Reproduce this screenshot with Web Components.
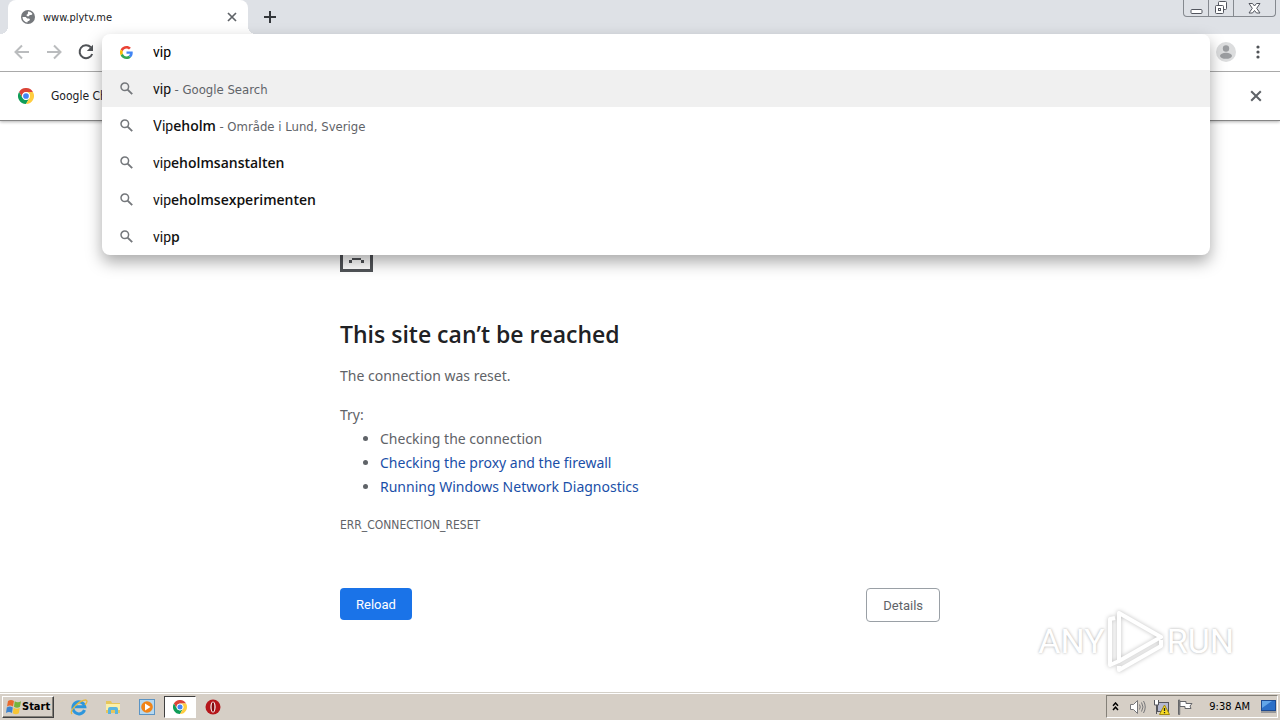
<!DOCTYPE html>
<html lang="en">
<head>
<meta charset="utf-8">
<title>www.plytv.me</title>
<style>
  html, body {
    height: 100%;
    margin: 0;
  }
  body {
    background: #fff;
    font-family: "DejaVu Sans Condensed", Tahoma, sans-serif;
    color: #202124;
  }
</style>
</head>
<body>
<browser-desktop>
  <tab-strip slot="tabs" label="www.plytv.me"></tab-strip>
  <tool-bar slot="toolbar">
    <omni-box value="vip">
      <search-suggestion active>vip <span slot="note">- Google Search</span></search-suggestion>
      <search-suggestion>Vip<b>eholm</b> <span slot="note">- Område i Lund, Sverige</span></search-suggestion>
      <search-suggestion>vip<b>eholmsanstalten</b></search-suggestion>
      <search-suggestion>vip<b>eholmsexperimenten</b></search-suggestion>
      <search-suggestion>vip<b>p</b></search-suggestion>
    </omni-box>
  </tool-bar>
  <info-bar slot="infobar">Google Ch</info-bar>
  <error-page></error-page>
  <any-run-mark slot="mark"></any-run-mark>
  <task-bar slot="taskbar"></task-bar>
</browser-desktop>

<script>
class BaseElement extends HTMLElement {
  constructor() {
    super();
    this.attachShadow({ mode: "open" });
  }

  connectedCallback() {
    this.shadowRoot.innerHTML = this.render();
  }
}

const buttonReset = `
  * { box-sizing: border-box; }
  button {
    display: grid;
    place-items: center;
    padding: 0;
    border: 0;
    background: none;
    font: inherit;
    color: inherit;
  }
  svg { display: block; }
`;

const chromeLogo = (size) => `
  <svg width="${size}" height="${size}" viewBox="0 0 48 48" aria-hidden="true">
    <path fill="#db4437" d="M3.2 12A24 24 0 0 1 44.8 12H24a12 12 0 0 0-10.4 18z"/>
    <path fill="#0f9d58" d="M3.2 12A24 24 0 0 0 24 48l10.4-18A12 12 0 0 1 13.6 30z"/>
    <path fill="#ffcd40" d="M44.8 12A24 24 0 0 1 24 48l10.4-18A12 12 0 0 0 24 12z"/>
    <circle cx="24" cy="24" r="11" fill="#fff"/>
    <circle cx="24" cy="24" r="8.6" fill="#4285f4"/>
  </svg>`;

const crossIcon = (size) => `
  <svg width="${size}" height="${size}" viewBox="0 0 10 10" aria-hidden="true">
    <path d="M1 1l8 8M9 1l-8 8" stroke="#5f6368" stroke-width="1.7"/>
  </svg>`;

class BrowserDesktop extends BaseElement {
  render() {
    return `
      <style>
        :host {
          display: flex;
          flex-direction: column;
          min-height: 100vh;
          position: relative;
        }
        main { flex: 1; }
      </style>
      <slot name="tabs"></slot>
      <slot name="toolbar"></slot>
      <slot name="infobar"></slot>
      <main><slot></slot></main>
      <slot name="mark"></slot>
      <slot name="taskbar"></slot>
    `;
  }
}

class TabStrip extends BaseElement {
  render() {
    return `
      <style>
        ${buttonReset}
        :host {
          display: flex;
          height: 34px;
          padding: 0 4px 0 8px;
          box-sizing: border-box;
          background: #dee1e6;
        }
        .tab {
          position: relative;
          display: flex;
          align-items: center;
          gap: 8px;
          width: 240px;
          padding: 0 10px 0 13px;
          border-radius: 8px 8px 0 0;
          background: #fff;
          font-size: 11px;
        }
        .tab::before, .tab::after {
          content: "";
          position: absolute;
          bottom: 0;
          width: 8px;
          height: 8px;
        }
        .tab::before {
          left: -8px;
          background: radial-gradient(circle at 0 0, transparent 8px, #fff 8px);
        }
        .tab::after {
          right: -8px;
          background: radial-gradient(circle at 100% 0, transparent 8px, #fff 8px);
        }
        .title { flex: 1; }
        .close { width: 12px; height: 16px; }
        .add { width: 28px; margin-left: 8px; }
        .window {
          display: flex;
          height: 17px;
          margin-left: auto;
          border: 1px solid #85898f;
          border-top: 0;
          border-radius: 0 0 4px 4px;
        }
        .window button { width: 25px; border-right: 1px solid #85898f; }
        .window button:last-child { width: 41px; border-right: 0; }
      </style>
      <div class="tab">
        <svg width="14" height="14" viewBox="0 0 14 14" aria-hidden="true">
          <circle cx="7" cy="7" r="7" fill="#75787c"/>
          <path fill="#fff" d="M7 1.600c2-.2 3.600 1 4.500 2.400l-1.200 1.100H8.600L8 6.300H6.200L5.300 5l1.500-.9zM1.500 7l3.200.1 1.500 1.400h1.900l.9 1-.8 1.300-1.500.5-.3 1.100c-2.800-.2-4.800-2.500-4.900-5.400z"/>
        </svg>
        <span class="title">${this.getAttribute("label")}</span>
        <button class="close" aria-label="Close tab">${crossIcon(10)}</button>
      </div>
      <button class="add" aria-label="New tab">
        <svg width="12" height="12" viewBox="0 0 12 12"><path d="M6 0v12M0 6h12" stroke="#33363b" stroke-width="2"/></svg>
      </button>
      <div class="window">
        <button aria-label="Minimize">
          <svg width="13" height="14" viewBox="0 0 13 14"><rect x="1" y="8.500" width="11" height="4" rx="1" fill="#fff" stroke="#53565f"/></svg>
        </button>
        <button aria-label="Restore">
          <svg width="14" height="14" viewBox="0 0 14 14" fill="#fff" stroke="#53565f">
            <rect x="4.500" y=".5" width="8" height="8" rx="1"/>
            <rect x="1.500" y="4.500" width="8" height="8" rx="1"/>
            <rect x="4.500" y="7.500" width="2" height="2"/>
          </svg>
        </button>
        <button aria-label="Close">
          <svg width="13" height="13" viewBox="0 0 13 13"><path fill="#fff" stroke="#53565f" d="M1 1.500h3.500l2 2.500 2-2.500H12L8.700 6.300 12 11H8.500l-2-2.500-2 2.500H1l3.300-4.700z"/></svg>
        </button>
      </div>
    `;
  }
}

class ToolBar extends BaseElement {
  render() {
    return `
      <style>
        ${buttonReset}
        :host {
          display: flex;
          position: relative;
          z-index: 2;
          height: 38px;
          padding: 0 6px;
          box-sizing: border-box;
          border-bottom: 1px solid #a9a9a9;
          background: #fff;
        }
        button { width: 32px; height: 36px; }
        slot { display: block; flex: 1; }
      </style>
      <button aria-label="Back" disabled>
        <svg width="16" height="16" viewBox="0 0 16 16" fill="none" stroke="#babcbe" stroke-width="2"><path d="M15 8H2M8 1.500L1.500 8 8 14.500"/></svg>
      </button>
      <button aria-label="Forward" disabled>
        <svg width="16" height="16" viewBox="0 0 16 16" fill="none" stroke="#babcbe" stroke-width="2"><path d="M1 8h13M8 1.500L14.500 8 8 14.500"/></svg>
      </button>
      <button aria-label="Reload">
        <svg width="16" height="16" viewBox="0 0 16 16"><path d="M12.800 3.200A6.500 6.500 0 1 0 14.200 10" fill="none" stroke="#505357" stroke-width="2"/><path d="M15 .8v6.200H8.800z" fill="#505357"/></svg>
      </button>
      <slot></slot>
      <button aria-label="Profile">
        <svg width="20" height="20" viewBox="0 0 20 20"><circle cx="10" cy="10" r="10" fill="#dcddde"/><circle cx="10" cy="6.500" r="3.200" fill="#9b9da0"/><ellipse cx="10" cy="13.800" rx="6" ry="3" fill="#9b9da0"/></svg>
      </button>
      <button aria-label="Menu">
        <svg width="4" height="14" viewBox="0 0 4 14" fill="#505357"><circle cx="2" cy="2" r="1.600"/><circle cx="2" cy="7" r="1.600"/><circle cx="2" cy="12" r="1.600"/></svg>
      </button>
    `;
  }
}

class OmniBox extends BaseElement {
  render() {
    return `
      <style>
        :host {
          display: block;
          position: relative;
        }
        .popup {
          position: absolute;
          top: 0;
          left: 0;
          right: 0;
          overflow: hidden;
          border-radius: 8px;
          background: #fff;
          box-shadow: 0 7px 16px rgba(0, 0, 0, 0.34);
        }
        label {
          display: flex;
          align-items: center;
          gap: 20px;
          height: 36px;
          padding: 0 18px;
        }
        svg { flex: none; }
        input {
          flex: 1;
          min-width: 0;
          padding: 0;
          border: 0;
          outline: 0;
          background: none;
          font-family: Roboto, sans-serif;
          font-size: 14px;
          color: #000;
        }
      </style>
      <div class="popup">
        <label>
          <svg width="13" height="13" viewBox="0 0 48 48" aria-label="Google">
            <path fill="#ea4335" d="M24 9.500c3.540 0 6.710 1.220 9.210 3.600l6.850-6.850C35.900 2.380 30.470 0 24 0 14.620 0 6.510 5.380 2.560 13.220l7.980 6.190C12.430 13.720 17.740 9.500 24 9.500z"/>
            <path fill="#4285f4" d="M46.980 24.550c0-1.570-.15-3.090-.38-4.550H24v9.020h12.940c-.58 2.960-2.260 5.480-4.780 7.180l7.730 6c4.510-4.180 7.090-10.360 7.090-17.650z"/>
            <path fill="#fbbc05" d="M10.530 28.590a14.500 14.500 0 0 1 0-9.180l-7.980-6.190a24 24 0 0 0 0 21.560l7.980-6.190z"/>
            <path fill="#34a853" d="M24 48c6.480 0 11.930-2.130 15.890-5.810l-7.730-6c-2.150 1.450-4.920 2.300-8.160 2.300-6.260 0-11.570-4.220-13.470-9.910l-7.980 6.190C6.510 42.620 14.620 48 24 48z"/>
          </svg>
          <input type="text" aria-label="Address and search bar" value="${this.getAttribute("value")}">
        </label>
        <slot></slot>
      </div>
    `;
  }
}

class SearchSuggestion extends BaseElement {
  render() {
    return `
      <style>
        :host {
          display: flex;
          align-items: center;
          gap: 20px;
          height: 37px;
          padding: 0 18px;
          font-family: Roboto, sans-serif;
          font-size: 14px;
          color: #111;
        }
        :host([active]) { background: #f0f0f0; }
        ::slotted(b) {
          font-family: "Open Sans", sans-serif;
          font-weight: 600;
        }
        ::slotted(span) {
          font-family: "DejaVu Sans Condensed", Tahoma, sans-serif;
          font-size: 13px;
          color: #5f6368;
        }
        svg { flex: none; }
      </style>
      <svg width="13" height="13" viewBox="0 0 13 13" fill="none" stroke="#75787c" aria-hidden="true">
        <circle cx="4.800" cy="4.800" r="3.800" stroke-width="1.500"/>
        <path d="M7.600 7.600l4.600 4.600" stroke-width="1.900"/>
      </svg>
      <div><slot></slot><slot name="note"></slot></div>
    `;
  }
}

class InfoBar extends BaseElement {
  render() {
    return `
      <style>
        ${buttonReset}
        :host {
          display: flex;
          position: relative;
          align-items: center;
          gap: 17px;
          height: 49px;
          padding: 0 18px;
          box-sizing: border-box;
          border-bottom: 1px solid #858585;
          box-shadow: 0 1px 3px rgba(0, 0, 0, 0.3);
          background: #fff;
          font-size: 12px;
        }
        button { width: 12px; height: 16px; margin-left: auto; }
      </style>
      ${chromeLogo(16)}
      <span><slot></slot></span>
      <button aria-label="Close">${crossIcon(12)}</button>
    `;
  }
}

class ErrorPage extends BaseElement {
  render() {
    return `
      <style>
        ${buttonReset}
        :host {
          display: block;
          max-width: 600px;
          margin: 0 auto;
          padding-top: 107px;
          font-family: "Noto Sans", "Segoe UI", sans-serif;
          font-size: 14px;
          line-height: 24px;
          color: #5f6368;
        }
        h1 {
          margin: 47px 0 15px;
          font-family: "Open Sans", "Segoe UI", sans-serif;
          font-size: 23px;
          font-weight: 600;
          line-height: 30px;
          color: #202124;
        }
        p { margin: 0 0 15px; }
        .try { margin: 0; }
        ul { margin: 0; padding-left: 40px; }
        a { color: #1a4fa8; text-decoration: none; }
        .code {
          margin: 14px 0 0;
          font-family: "DejaVu Sans Condensed", Tahoma, sans-serif;
          font-size: 12px;
        }
        .actions {
          display: flex;
          justify-content: space-between;
          align-items: flex-start;
          margin-top: 51px;
          font-family: Roboto, sans-serif;
          font-size: 13px;
        }
        .actions button {
          height: 34px;
          padding: 2px 16px 0;
          border: 1px solid #9aa0a6;
          border-radius: 4px;
        }
        .actions .primary {
          height: 32px;
          border: 0;
          background: #1a73e8;
          color: #fff;
        }
      </style>
      <svg width="33" height="44" viewBox="0 0 33 44" fill="#505357" aria-hidden="true">
        <path d="M0 0h22v3H3v38h27V11h3v33H0z"/>
        <path d="M22 0h3v3h3v3h3v3h2v3H22z"/>
        <path d="M9 20h3v3H9zM21 20h3v3h-3zM12 30h9v2h3v3h-3v-3h-9v3H9v-3h3z"/>
      </svg>
      <h1>This site can’t be reached</h1>
      <p>The connection was reset.</p>
      <p class="try">Try:</p>
      <ul>
        <li>Checking the connection</li>
        <li><a href="#proxy">Checking the proxy and the firewall</a></li>
        <li><a href="#diagnostics">Running Windows Network Diagnostics</a></li>
      </ul>
      <p class="code">ERR_CONNECTION_RESET</p>
      <div class="actions">
        <button class="primary">Reload</button>
        <button>Details</button>
      </div>
    `;
  }
}

class AnyRunMark extends BaseElement {
  render() {
    return `
      <style>
        :host {
          display: flex;
          position: absolute;
          right: 46px;
          bottom: 48px;
          align-items: center;
          gap: 2px;
          font-family: Roboto, sans-serif;
          font-size: 34px;
          line-height: 62px;
          color: #fff;
          text-shadow: 0 0 3px rgba(0, 0, 0, 0.34);
        }
        svg { filter: drop-shadow(0 0 2px rgba(0, 0, 0, 0.26)); }
      </style>
      <span>ANY</span>
      <svg width="58" height="62" viewBox="0 0 58 62" fill="none" stroke="#fff" stroke-width="4" stroke-linejoin="round" aria-hidden="true">
        <path d="M12 3v48l42-24z"/>
        <path d="M8 8L3 9v46l9-4M12 56v4l42-24v-6"/>
      </svg>
      <span>RUN</span>
    `;
  }
}

class TaskBar extends BaseElement {
  render() {
    return `
      <style>
        ${buttonReset}
        :host {
          display: flex;
          align-items: center;
          height: 28px;
          padding: 0 2px;
          box-sizing: border-box;
          border-top: 1px solid #d4d0c8;
          box-shadow: inset 0 1px #fff;
          background: #d6cfc6;
          font-size: 11px;
          color: #000;
        }
        .start {
          display: flex;
          align-items: center;
          height: 22px;
          padding: 0 3px 0 2px;
          border: 1px solid;
          border-color: #fff #404040 #404040 #fff;
          box-shadow: inset -1px -1px #848078;
          font-weight: bold;
        }
        nav { display: flex; align-items: center; margin-left: 8px; }
        nav button { width: 34px; height: 22px; }
        nav .active {
          width: 32px;
          border: 1px solid;
          border-color: #404040 #fff #fff #404040;
          background: #fff;
        }
        .tray {
          display: flex;
          align-items: center;
          height: 23px;
          margin-left: auto;
          padding-left: 4px;
          border: 1px solid;
          border-color: #848078 #fff #fff #848078;
        }
        .tray button { width: 24px; height: 20px; }
        .tray .more { width: 8px; margin-right: 6px; }
        time { margin: 0 9px 0 12px; }
        .tray .desktop { width: 18px; }
      </style>
      <button class="start">
        <svg width="17" height="16" viewBox="0 0 17 16" aria-hidden="true">
          <path fill="#e8692c" d="M3 2q3-2 6 0L8 7.500q-3-2-6 0z"/>
          <path fill="#74b43c" d="M9.700 2.300q3 1.700 6.300 0L15 7.800q-3 1.700-6 0z"/>
          <path fill="#3c83ce" d="M1.800 8.500q3-2 6 0L7 14q-3-2-6 0z"/>
          <path fill="#f7c534" d="M8.600 8.800q3 1.700 6.200 0l-1 5.500q-3 1.700-6 0z"/>
        </svg>
        Start
      </button>
      <nav>
        <button aria-label="Internet Explorer">
          <svg width="18" height="18" viewBox="0 0 18 18" fill="none">
            <path d="M14.500 12a6 6 0 1 1 .3-3.200H5" stroke="#2d96dc" stroke-width="3"/>
            <path d="M2 16c-3-3 7-14 14-14 2 1 .5 3-1 5" stroke="#e7b93c" stroke-width="1.300"/>
          </svg>
        </button>
        <button aria-label="Explorer">
          <svg width="18" height="18" viewBox="0 0 18 18">
            <path fill="#e6c65c" d="M2 3h5l1 2h8v10H2z"/>
            <path fill="#fbf0a8" d="M2 6h14v6H2z"/>
            <path fill="#59b5e0" d="M4 16v-5q0-2 2-2h6q2 0 2 2v5h-3v-4H7v4z"/>
          </svg>
        </button>
        <button aria-label="Media Player">
          <svg width="16" height="16" viewBox="0 0 16 16">
            <rect x=".5" y=".5" width="15" height="15" fill="#b5d8f0" stroke="#5b94c4"/>
            <circle cx="8" cy="8" r="5.800" fill="#f08418"/>
            <path fill="#fff" d="M6 4.500v7L11.500 8z"/>
          </svg>
        </button>
        <button class="active" aria-label="Google Chrome">${chromeLogo(14)}</button>
        <button aria-label="Opera">
          <svg width="16" height="16" viewBox="0 0 16 16"><circle cx="8" cy="8" r="7.500" fill="#b5161b"/><ellipse cx="8" cy="8" rx="2.600" ry="5.500" fill="#fff"/><ellipse cx="8" cy="8" rx="1.400" ry="4.700" fill="#80090e"/></svg>
        </button>
      </nav>
      <div class="tray">
        <button class="more" aria-label="Show hidden icons">
          <svg width="7" height="9" viewBox="0 0 7 9" fill="none" stroke="#000" stroke-width="1.500"><path d="M1 3.800L3.500 1 6 3.800M1 8l2.500-2.800L6 8"/></svg>
        </button>
        <button aria-label="Volume">
          <svg width="17" height="16" viewBox="0 0 17 16" fill="none" stroke="#77777a">
            <path fill="#fff" d="M1.500 5.500h3l4-4v13l-4-4h-3z"/>
            <path d="M10.500 5.500q1.500 2.500 0 5M12.500 3.500q3 4.500 0 9M14.500 2q3.500 6 0 12"/>
          </svg>
        </button>
        <button aria-label="Network">
          <svg width="17" height="16" viewBox="0 0 17 16">
            <rect x="4.500" y="3.500" width="11" height="9" fill="#b5b9d0" stroke="#55565d"/>
            <path d="M1.500 1v5h4V1M3.500 6v9" fill="#fff" stroke="#55565d"/>
            <path d="M11.500 6l5 9.500h-10z" fill="#f7dc25" stroke="#a28a10"/>
            <path d="M11.500 9v3M11.500 13v1.200" stroke="#222" stroke-width="1.300"/>
          </svg>
        </button>
        <button aria-label="Action Center">
          <svg width="17" height="16" viewBox="0 0 17 16" fill="#fff" stroke="#66676a">
            <path d="M1.500 1v14.500h1.200V1z"/>
            <path d="M3 2.500h6v2h6l-2 2.500 1 2.500H8v-2H3z"/>
          </svg>
        </button>
        <time>9:38 AM</time>
        <button class="desktop" aria-label="Show desktop">
          <svg width="15" height="13" viewBox="0 0 15 13"><rect x=".5" y=".5" width="14" height="10" fill="#2b6fc8" stroke="#1d4a91"/><path d="M1 1h10L1 8z" fill="#62a6e9"/><path d="M0 12h15" stroke="#58616e"/></svg>
        </button>
      </div>
    `;
  }
}

customElements.define("browser-desktop", BrowserDesktop);
customElements.define("tab-strip", TabStrip);
customElements.define("tool-bar", ToolBar);
customElements.define("omni-box", OmniBox);
customElements.define("search-suggestion", SearchSuggestion);
customElements.define("info-bar", InfoBar);
customElements.define("error-page", ErrorPage);
customElements.define("any-run-mark", AnyRunMark);
customElements.define("task-bar", TaskBar);
</script>
</body>
</html>
